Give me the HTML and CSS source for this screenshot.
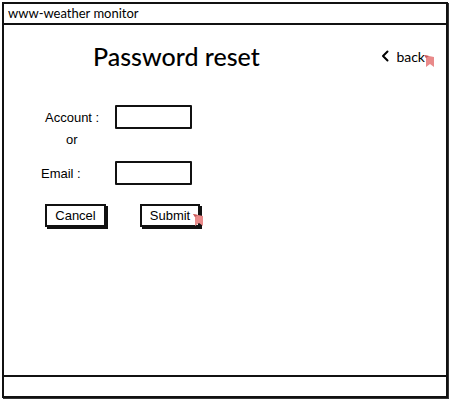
FILE: index.html
```html
<!DOCTYPE html>
<html>
<head>
<meta charset="utf-8">
<link rel="stylesheet" href="styles.css">
</head>
<body>
<div class="window">
  <div class="titlebar">www-weather monitor</div>
  <div class="main">
    <div class="top">
      <h1 class="title">Password reset</h1>
      <a class="back">
        <svg class="chev" width="8" height="12" viewBox="0 0 8 12"><path d="M6.5 1.5 L2 6 L6.5 10.5" fill="none" stroke="#000" stroke-width="2" stroke-linecap="round" stroke-linejoin="round"/></svg>
        <span class="back-text">back</span>
        <svg class="cursor cursor-back" width="12" height="14" viewBox="0 0 12 14"><path d="M1 1 L11 3 L11 13 L7 10 L3 13 L3 4 Z" fill="#e98a8a"/><path d="M1 1 L6 2 L3 4 Z" fill="#c85a5a"/></svg>
      </a>
    </div>
    <div class="form">
      <div class="row">
        <label class="label label-account">Account :</label>
        <div class="input"></div>
      </div>
      <div class="or">or</div>
      <div class="row">
        <label class="label label-email">Email :</label>
        <div class="input"></div>
      </div>
      <div class="buttons">
        <div class="btn btn-cancel">Cancel</div>
        <div class="btn btn-submit">Submit
          <svg class="cursor cursor-submit" width="12" height="14" viewBox="0 0 12 14"><path d="M1 1 L11 3 L11 13 L7 10 L3 13 L3 4 Z" fill="#e98a8a"/><path d="M1 1 L6 2 L3 4 Z" fill="#c85a5a"/></svg>
        </div>
      </div>
    </div>
  </div>
  <div class="footer"></div>
</div>
</body>
</html>
```
FILE: styles.css
```css
html, body { margin: 0; padding: 0; background: #fff; }
body { width: 452px; height: 402px; overflow: hidden; }
.window {
  margin: 2px 0 0 2px;
  width: 442px;
  height: 392px;
  border: 2px solid #111;
  box-shadow: 1px 1px 0 #333;
  display: flex;
  flex-direction: column;
}
.titlebar {
  height: 19px;
  border-bottom: 2px solid #111;
  font-family: "Lato", "Open Sans", sans-serif;
  font-size: 13px;
  line-height: 19px;
  padding-left: 4px;
  color: #000;
}
.main { flex: 1; display: flex; flex-direction: column; }
.top {
  display: flex;
  align-items: center;
  margin-top: 16px;
  height: 30px;
}
.title {
  margin: 0 0 0 89px;
  font-family: "Lato", "Open Sans", sans-serif;
  font-weight: 500;
  font-size: 25px;
  line-height: 30px;
  color: #000;
}
.back {
  margin-left: auto;
  margin-right: 21px;
  display: flex;
  align-items: center;
  position: relative;
  font-family: "Lato", "Open Sans", sans-serif;
  font-size: 14px;
  color: #000;
}
.chev { margin-right: 7px; }
.cursor { position: absolute; }
.cursor-back { left: 42px; top: 6px; }
.form {
  margin-top: 34px;
  font-family: "Liberation Sans", Arial, sans-serif;
  font-size: 13px;
  color: #000;
}
.row { display: flex; align-items: center; height: 24px; }
.label { display: block; }
.label-account { margin-left: 41px; width: 70px; }
.label-email { margin-left: 37px; width: 74px; }
.input {
  width: 73px;
  height: 20px;
  border: 2px solid #111;
  border-radius: 1px;
}
.or { margin: 4px 0 0 62px; height: 14px; line-height: 14px; margin-bottom: 14px; }
.buttons { display: flex; margin-top: 19px; }
.btn {
  position: relative;
  height: 19px;
  line-height: 19px;
  border: 2px solid #111;
  box-shadow: 2px 2px 0 #111;
  font-size: 13px;
  text-align: center;
  background: #fff;
}
.btn-cancel { margin-left: 41px; width: 57px; }
.btn-submit { margin-left: 34px; width: 56px; }
.cursor-submit { left: 50px; top: 7px; }
.footer {
  height: 19px;
  border-top: 2px solid #111;
}
```
